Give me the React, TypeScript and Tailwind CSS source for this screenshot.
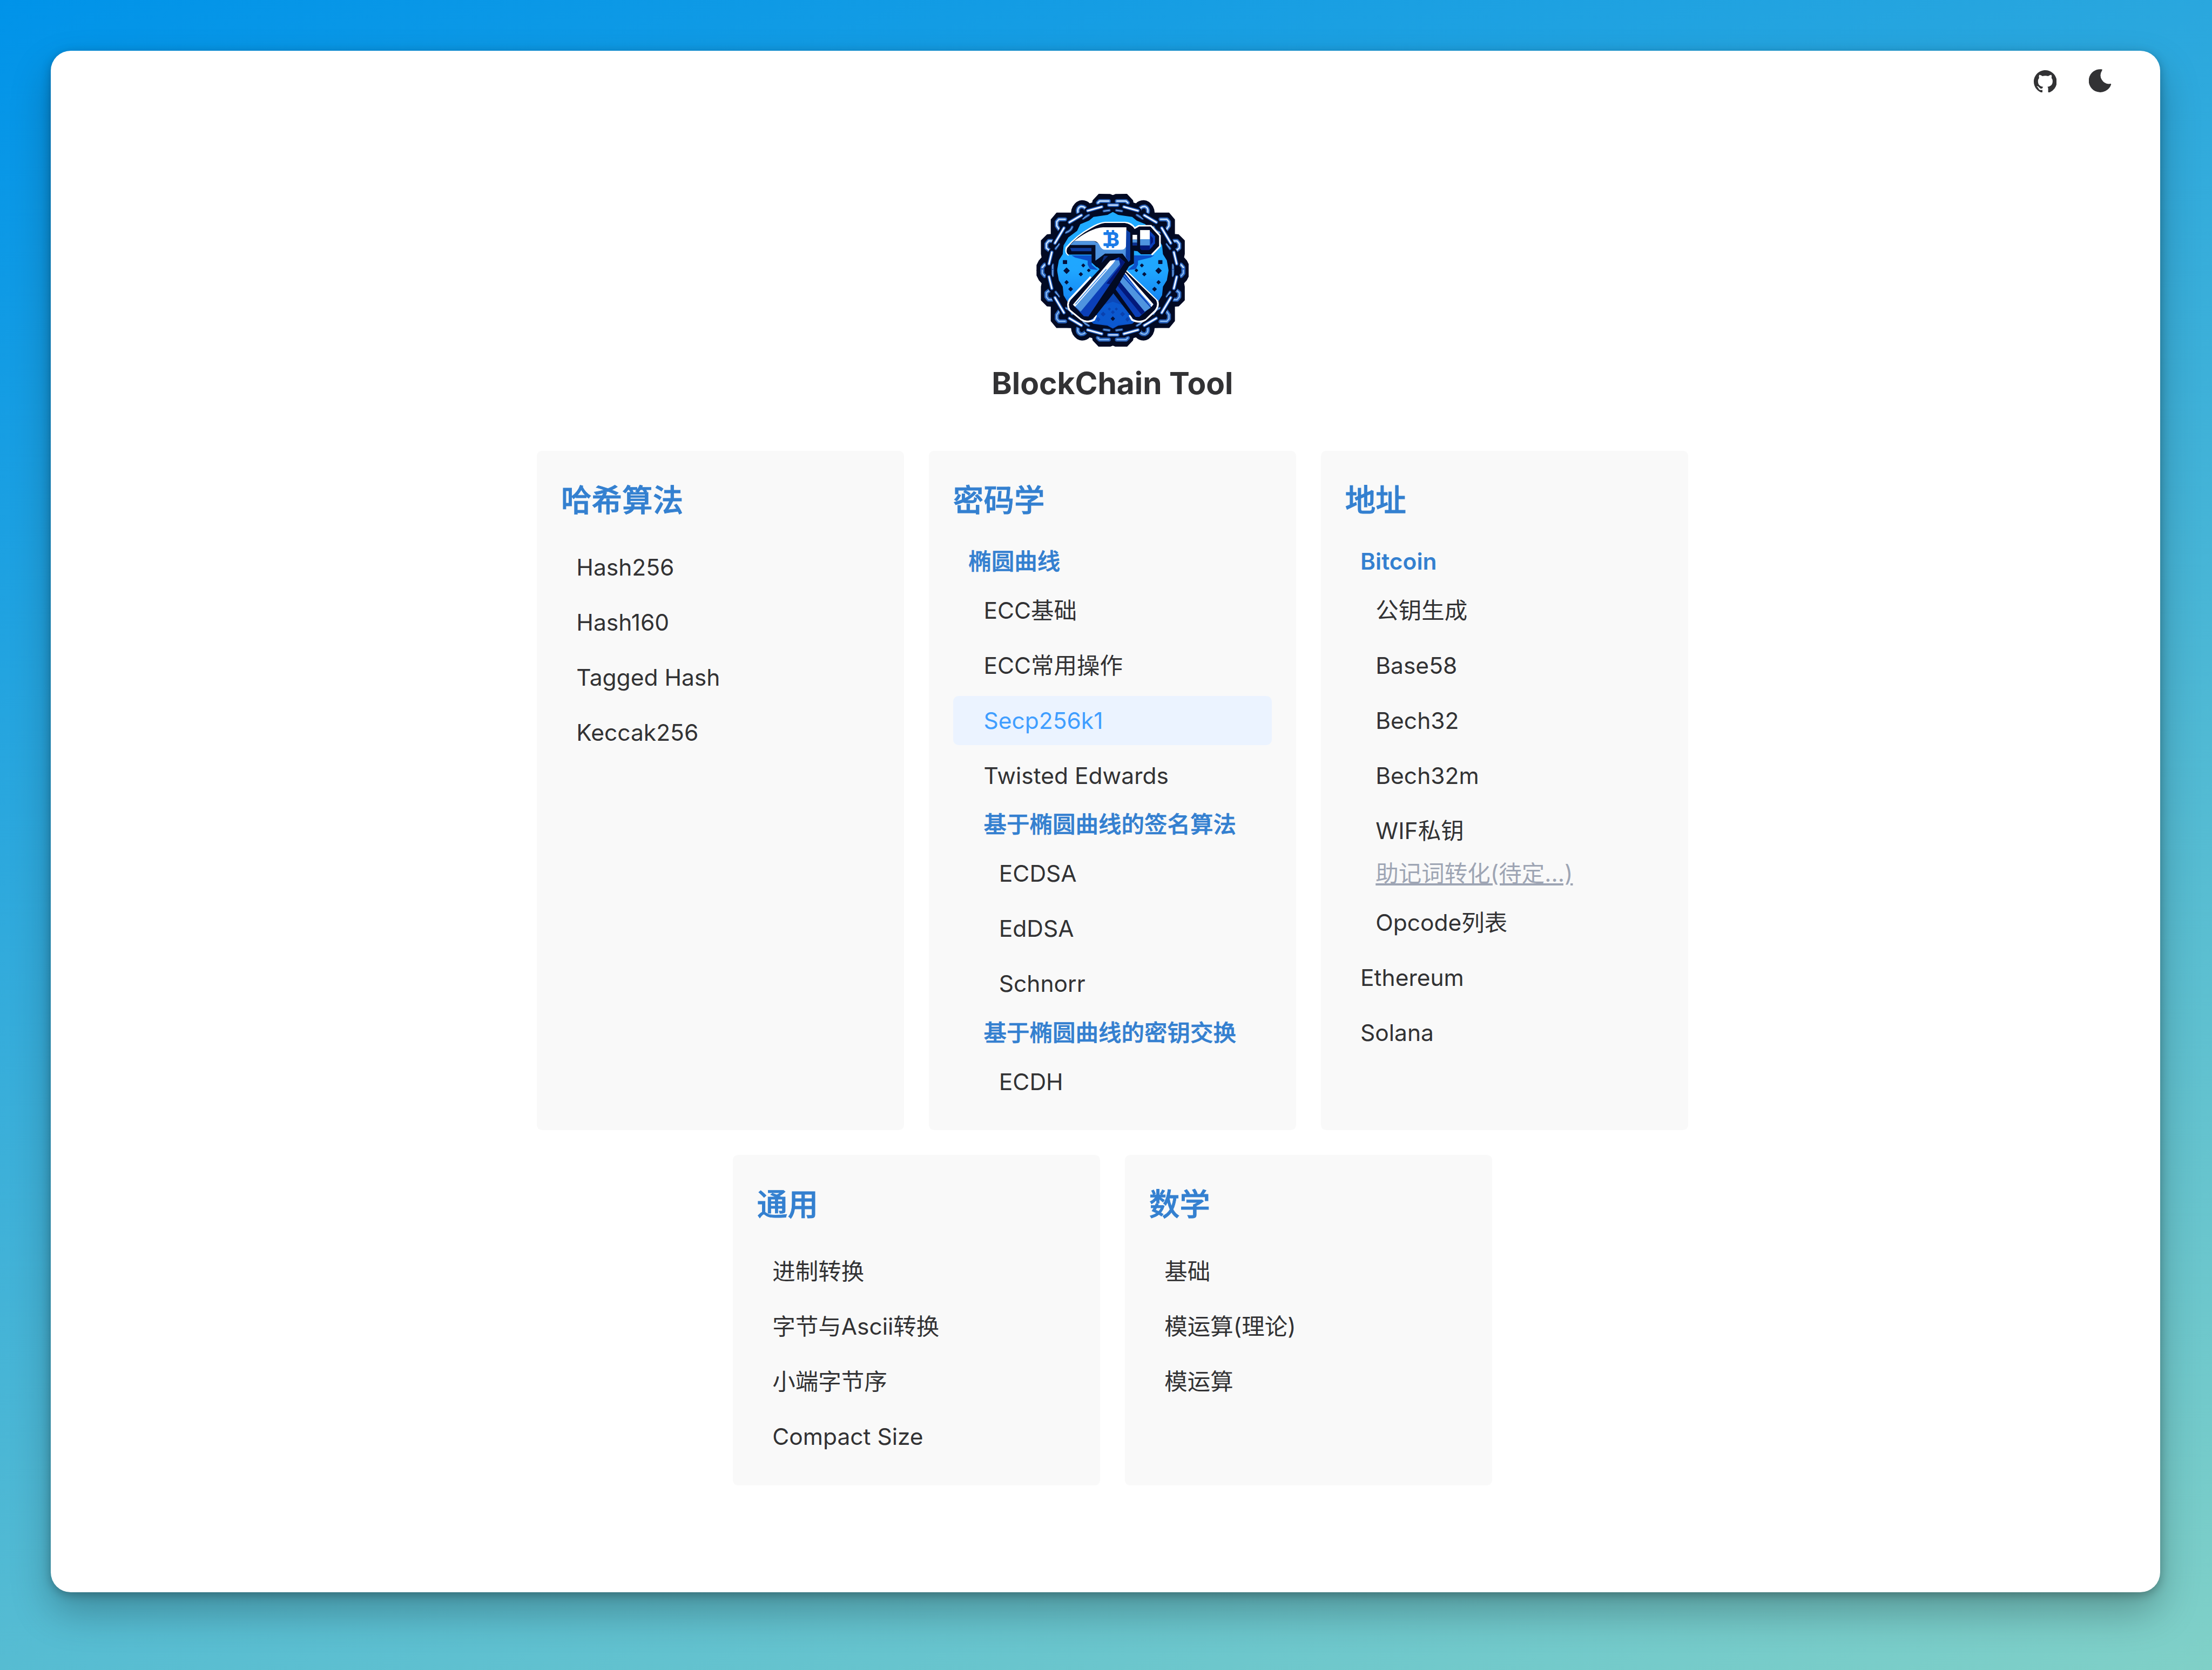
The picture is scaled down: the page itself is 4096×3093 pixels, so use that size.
import React from "react";

type Entry = {
  label: string;
  depth: 1 | 2 | 3;
  kind?: "heading" | "active" | "pending";
};

type Section = { title: string; entries: Entry[] };

const sections: Section[] = [
  {
    title: "哈希算法",
    entries: [
      { label: "Hash256", depth: 1 },
      { label: "Hash160", depth: 1 },
      { label: "Tagged Hash", depth: 1 },
      { label: "Keccak256", depth: 1 },
    ],
  },
  {
    title: "密码学",
    entries: [
      { label: "椭圆曲线", depth: 1, kind: "heading" },
      { label: "ECC基础", depth: 2 },
      { label: "ECC常用操作", depth: 2 },
      { label: "Secp256k1", depth: 2, kind: "active" },
      { label: "Twisted Edwards", depth: 2 },
      { label: "基于椭圆曲线的签名算法", depth: 2, kind: "heading" },
      { label: "ECDSA", depth: 3 },
      { label: "EdDSA", depth: 3 },
      { label: "Schnorr", depth: 3 },
      { label: "基于椭圆曲线的密钥交换", depth: 2, kind: "heading" },
      { label: "ECDH", depth: 3 },
    ],
  },
  {
    title: "地址",
    entries: [
      { label: "Bitcoin", depth: 1, kind: "heading" },
      { label: "公钥生成", depth: 2 },
      { label: "Base58", depth: 2 },
      { label: "Bech32", depth: 2 },
      { label: "Bech32m", depth: 2 },
      { label: "WIF私钥", depth: 2 },
      { label: "助记词转化(待定...)", depth: 2, kind: "pending" },
      { label: "Opcode列表", depth: 2 },
      { label: "Ethereum", depth: 1 },
      { label: "Solana", depth: 1 },
    ],
  },
  {
    title: "通用",
    entries: [
      { label: "进制转换", depth: 1 },
      { label: "字节与Ascii转换", depth: 1 },
      { label: "小端字节序", depth: 1 },
      { label: "Compact Size", depth: 1 },
    ],
  },
  {
    title: "数学",
    entries: [
      { label: "基础", depth: 1 },
      { label: "模运算(理论)", depth: 1 },
      { label: "模运算", depth: 1 },
    ],
  },
];

const indent = { 1: "pl-[28.4px]", 2: "pl-[56.6px]", 3: "pl-[85px]" };

function Row({ label, depth, kind }: Entry) {
  if (kind === "heading") {
    const latin = /^[A-Za-z]+$/.test(label);
    return (
      <h3
        className={`text-[#3480d0] ${indent[depth]} ${
          latin ? "font-semibold" : "font-medium [-webkit-text-stroke:0.7px_#3480d0]"
        }`}
      >
        {label}
      </h3>
    );
  }
  if (kind === "pending") {
    return (
      <div className={`-mt-[11.3px] text-[#9ea5b4] ${indent[depth]}`}>
        <span className="underline decoration-[3.9px] underline-offset-[3px]">{label}</span>
      </div>
    );
  }
  return (
    <a
      className={`block rounded-[10px] py-[11.25px] ${indent[depth]} ${
        kind === "active" ? "bg-[#ebf3ff] text-[#409eff]" : ""
      }`}
    >
      {label}
    </a>
  );
}

function Card({ title, entries }: Section) {
  return (
    <section className="w-[680.2px] rounded-[9.4px] bg-[#f9f9f9] px-[45px] pt-[46.5px] pb-[44.6px]">
      <h2 className="mb-[33.6px] text-[56.6px] leading-[90.4px] font-medium text-[#3480d0] [-webkit-text-stroke:0.9px_#3480d0]">
        {title}
      </h2>
      <div className="flex flex-col gap-[11.73px]">
        {entries.map((e) => (
          <Row key={e.label} {...e} />
        ))}
      </div>
    </section>
  );
}

const rim =
  "M505 487V62L520 56L584 55L617 90L620 104L638 109Q652 92 680 91Q710 92 730 124Q740 142 740 161L767 162H824L855 199V283L878 285L911 318V394L907 414L923 432L936 458V487Z";
const sky =
  "M505 487V155L535 172L615 183L640 204L690 225L708 262L758 300L785 345L790 395L812 430L822 487Z";
const outerLinks = [
  "M528 93H580L590 103",
  "M656 146Q662 122 688 124Q708 132 704 156",
  "M776 197H812L824 211V234L806 260",
  "M852 320H870L883 336V360L868 372",
  "M893 455L906 470V488",
];
const bars = ["M568 126L648 148", "M684 174L752 214", "M783 246L834 332", "M852 384L868 450"];
const innerLinks = [
  "M525 146L556 150",
  "M642 172L674 192",
  "M736 240Q742 262 772 272",
  "M812 338L830 364",
  "M847 455V488",
];

function ChainQuarter({ transform, lower }: { transform?: string; lower: boolean }) {
  return (
    <g transform={transform} fill="none" strokeLinecap="round" strokeLinejoin="round">
      {outerLinks.map((d) => (
        <g key={d}>
          <path d={d} stroke="#2458ae" strokeWidth="23" />
          <path d={d} stroke={lower ? "#3f7dd2" : "#6ea6ea"} strokeWidth="12" />
          <path d={d} stroke={lower ? "#9cc6f6" : "#e4effd"} strokeWidth="5" />
        </g>
      ))}
      {innerLinks.map((d) => (
        <g key={d}>
          <path d={d} stroke="#1c4f9f" strokeWidth="15" />
          <path d={d} stroke="#7fb0ea" strokeWidth="5" />
        </g>
      ))}
      {bars.map((d) => (
        <g key={d}>
          <path d={d} stroke="#020a24" strokeWidth="38" />
          <path d={d} stroke="#2560c0" strokeWidth="19" />
          <path d={d} stroke="#f4f8ff" strokeWidth="9" />
        </g>
      ))}
    </g>
  );
}

const mirrors = [
  undefined,
  "translate(1010 0) scale(-1 1)",
  "translate(0 974) scale(1 -1)",
  "translate(1010 974) scale(-1 -1)",
];

const sparks: [number, number, number][] = [
  [242, 489, 16],
  [337, 459, 9],
  [323, 509, 10],
  [368, 487, 8],
  [242, 555, 10],
  [265, 594, 11],
];

function Logo() {
  return (
    <svg viewBox="70 52 868 870" className="h-[283.4px] w-[282.7px]">
      <defs>
        <linearGradient id="sky" gradientUnits="userSpaceOnUse" x1="0" y1="155" x2="0" y2="815">
          <stop offset="0" stopColor="#1fabff" />
          <stop offset="0.5" stopColor="#1fa6ff" />
          <stop offset="0.72" stopColor="#168cf5" />
          <stop offset="0.86" stopColor="#0b5bd2" />
          <stop offset="1" stopColor="#0a4cc0" />
        </linearGradient>
        <clipPath id="disc">
          {mirrors.map((t, i) => (
            <path key={i} d={sky} transform={t} />
          ))}
        </clipPath>
      </defs>
      {mirrors.map((t, i) => (
        <path
          key={i}
          d={rim}
          transform={t}
          fill="#020a24"
          stroke="#020a24"
          strokeWidth="6"
          strokeLinejoin="round"
        />
      ))}
      {mirrors.map((t, i) => (
        <ChainQuarter key={i} transform={t} lower={i > 1} />
      ))}
      <path d="M482 116H532M482 854H532" stroke="#2560c0" strokeWidth="20" strokeLinecap="round" />
      <path d="M482 116H532M482 854H532" stroke="#cfe1fa" strokeWidth="8" strokeLinecap="round" />
      <rect x="180" y="150" width="650" height="675" fill="url(#sky)" clipPath="url(#disc)" />

      {/* shade under the hammer head */}
      <path d="M270 402H385V455L420 485L375 480L362 455V432L290 414Z" fill="#0b50c8" />
      <path d="M740 402H625V455L590 485L635 480L648 455V432L720 414Z" fill="#0b50c8" />

      <g fill="#04123c" stroke="#04123c" strokeWidth="4" strokeLinejoin="round">
        <rect x="223" y="431" width="20" height="18" />
        <rect x="765" y="431" width="20" height="18" />
        {sparks.map(([x, y, r]) => (
          <React.Fragment key={`${x}-${y}`}>
            <path d={`M${x} ${y - r}L${x + r} ${y}L${x} ${y + r}L${x - r} ${y}Z`} />
            <path d={`M${1007 - x} ${y - r}L${1007 - x + r} ${y}L${1007 - x} ${y + r}L${1007 - x - r} ${y}Z`} />
          </React.Fragment>
        ))}
      </g>

      {/* wedge between the handles */}
      <path d="M505 610L604 745L608 790L540 795L505 815L470 795L402 790L410 745Z" fill="#0b58cf" />
      <path d="M505 610L560 685L505 665L450 685Z" fill="#0c48b8" />
      <path
        d="M450 722l14 14-14 14-14-14ZM560 722l14 14-14 14-14-14ZM485 698l9 9-9 9-9-9ZM525 698l9 9-9 9-9-9ZM505 714l11 11-11 11-11-11ZM422 752l12 14-12 14-12-14ZM588 752l12 14-12 14-12-14Z"
        fill="#0a41ae"
      />
      <path d="M505 749l13 13-13 13-13-13Z" fill="#04123c" />

      {/* rear handle */}
      <path
        d="M572 482L758 662Q768 690 744 720L690 768Q655 790 614 768L600 742"
        fill="none"
        stroke="#fff"
        strokeWidth="11"
        strokeLinejoin="round"
      />
      <path d="M568 480L750 655Q764 680 746 708L690 764Q655 783 620 763L500 608L480 560Z" fill="#020a24" />
      <path d="M562 494L736 683L655 752H634L508 577Z" fill="#0b3fb8" />
      <path d="M550 510L720 700L686 722L533 537Z" fill="#4f94e0" />
      <path d="M533 537L686 722L668 740L518 558Z" fill="#03187a" />
      <path d="M562 490L578 500L736 680L724 695Z" fill="#fff" />
      <path d="M564 512L722 686" stroke="#3c8fee" strokeWidth="5" />

      {/* hammer head */}
      <path
        d="M255 400Q234 386 242 358Q300 292 380 247Q430 218 460 216H575Q612 219 630 248L652 235H722L772 290V350L725 398"
        fill="none"
        stroke="#fff"
        strokeWidth="11"
        strokeLinejoin="round"
      />
      <path
        d="M252 397Q236 385 246 360Q300 292 384 248Q432 220 460 218H573Q608 222 629 252L655 238H718L768 292V348L722 396H665L645 378L625 376V448L590 468H412L384 442V397Z"
        fill="#020a24"
      />
      <path d="M262 343L285 320H395L440 340L465 368H560L582 345V258L590 262V430L560 392H460L406 432V343Z" fill="#4f94e0" />
      <path d="M285 320Q380 246 450 242H582V345Q576 370 550 370H465Q440 370 430 345Q420 322 395 320Z" fill="#fff" />
      <path d="M582 258L604 272V428L594 442L578 410Z" fill="#0b3fa8" />
      <path d="M262 360H383V378H270Z" fill="#0d3c9e" />
      <rect x="617" y="285" width="26" height="27" fill="#fff" />
      <rect x="617" y="312" width="26" height="18" fill="#4f94e0" />
      <rect x="617" y="330" width="26" height="16" fill="#0b2f90" />
      <path d="M660 258H715V312H660Z" fill="#fff" />
      <path d="M660 310H715V346H660Z" fill="#4f94e0" />
      <path d="M660 346H715L735 350L712 372H668L660 364Z" fill="#03187a" />
      <path d="M715 262L745 294V334L715 366Z" fill="#0b3fb8" />
      <path d="M720 290L733 304V326L720 342Z" fill="#03187a" />
      <g fill="#1a7be8">
        <text x="470" y="349" fontFamily="Inter, sans-serif" fontWeight="800" fontSize="108">
          B
        </text>
        <rect x="452" y="270" width="26" height="16" rx="3" />
        <rect x="452" y="333" width="26" height="16" rx="3" />
        <rect x="468" y="258" width="14" height="16" rx="3" />
        <rect x="499" y="258" width="14" height="16" rx="3" />
        <rect x="468" y="344" width="14" height="16" rx="3" />
        <rect x="499" y="344" width="14" height="16" rx="3" />
      </g>

      {/* front handle */}
      <path
        d="M380 524L260 652Q242 682 258 712L322 764Q362 790 398 768L410 742"
        fill="none"
        stroke="#fff"
        strokeWidth="11"
        strokeLinejoin="round"
      />
      <path d="M480 394H560L604 452L505 622L402 752Q365 786 325 761L264 711Q246 680 266 655L430 480L412 464Z" fill="#020a24" />
      <path d="M455 405H478L440 446Z" fill="#0a2a78" />
      <path d="M280 684L500 430L540 412L574 440L366 750L340 748Z" fill="#0b3fb8" />
      <path d="M280 684L500 430H540L548 450L322 722Z" fill="#4f94e0" />
      <path d="M538 412L574 440L490 566L468 562L548 462Z" fill="#03187a" />
      <path d="M278 682L490 432L520 428L508 446L290 694Z" fill="#fff" />
      <path d="M292 680L468 480" stroke="#3c8fee" strokeWidth="5" />
    </svg>
  );
}

function GithubIcon() {
  return (
    <svg viewBox="0 0 16 15.7" className="h-[41.9px] w-[42.6px]" fill="currentColor">
      <path d="M8 0C3.58 0 0 3.58 0 8c0 3.54 2.29 6.53 5.47 7.59.4.07.55-.17.55-.38 0-.19-.01-.82-.01-1.49-2.01.37-2.53-.49-2.69-.94-.09-.23-.48-.94-.82-1.13-.28-.15-.68-.52-.01-.53.63-.01 1.08.58 1.23.82.72 1.21 1.87.87 2.33.66.07-.52.28-.87.51-1.07-1.78-.2-3.64-.89-3.64-3.95 0-.87.31-1.59.82-2.15-.08-.2-.36-1.02.08-2.12 0 0 .67-.21 2.2.82.64-.18 1.32-.27 2-.27s1.36.09 2 .27c1.53-1.04 2.2-.82 2.2-.82.44 1.1.16 1.92.08 2.12.51.56.82 1.27.82 2.15 0 3.07-1.87 3.75-3.65 3.95.29.25.54.73.54 1.48 0 1.07-.01 1.93-.01 2.2 0 .21.15.46.55.38A8.01 8.01 0 0 0 16 8c0-4.42-3.58-8-8-8Z" />
    </svg>
  );
}

function MoonIcon() {
  return (
    <svg viewBox="476 216 132 132" className="size-[43px]" fill="currentColor">
      <path d="M546 216.7A65.5 65.5 0 1 0 602 305Q604 296 594 300A49 49 0 0 1 550 225Q556 217 546 216.7Z" />
    </svg>
  );
}

export default function App() {
  return (
    <div className="h-[3093px] w-[4096px] overflow-hidden bg-[linear-gradient(160deg,#0093E9_0%,#80D0C7_100%)] pt-[93.8px] pl-[93.8px] font-[Inter,'Noto_Sans_CJK_SC',sans-serif] text-[42.5px] leading-[67.8px] text-[#323234]">
      <div className="flex h-[2855.4px] w-[3906.2px] flex-col rounded-[37px] bg-white shadow-[0_36px_72px_rgba(0,0,0,0.26),0_5px_18px_rgba(0,0,0,0.26)]">
        <header className="flex h-[77.6px] items-end justify-end gap-[60px] pr-[88.5px]">
          <GithubIcon />
          <MoonIcon />
        </header>
        <main className="flex flex-col items-center pt-[187.4px] pl-[26px]">
          <Logo />
          <h1 className="mt-[23px] text-[56.8px] leading-[90.4px] font-bold">BlockChain Tool</h1>
          <div className="mt-[79.8px] flex w-[2140px] flex-wrap justify-center gap-[45.7px]">
            {sections.map((s) => (
              <Card key={s.title} {...s} />
            ))}
          </div>
        </main>
      </div>
    </div>
  );
}
